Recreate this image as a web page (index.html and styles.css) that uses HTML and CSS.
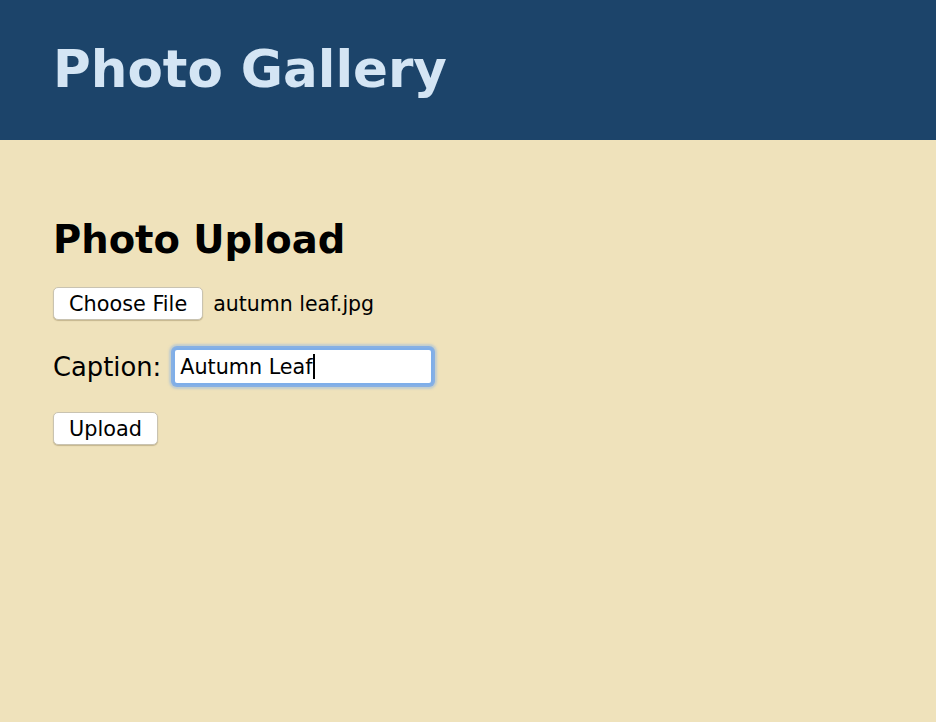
FILE: index.html
```html
<!DOCTYPE html>
<html>
<head>
<meta charset="utf-8">
<link rel="stylesheet" href="styles.css">
</head>
<body>
<header class="top">
  <h1 class="title">Photo Gallery</h1>
</header>
<main class="content">
  <h2 class="section-title">Photo Upload</h2>
  <div class="file-row">
    <button class="btn" type="button">Choose File</button>
    <span class="file-name">autumn leaf.jpg</span>
  </div>
  <div class="caption-row">
    <label class="caption-label">Caption:</label>
    <span class="input-wrap"><span class="input-text">Autumn Leaf</span><span class="caret"></span></span>
  </div>
  <div class="upload-row">
    <button class="btn" type="button">Upload</button>
  </div>
</main>
</body>
</html>
```
FILE: styles.css
```css
html, body {
  margin: 0;
  padding: 0;
  height: 100%;
}
body {
  background: #efe2bb;
  font-family: "DejaVu Sans", Verdana, sans-serif;
  color: #000;
}
.top {
  background: #1c446a;
  height: 140px;
  padding: 0 53px;
  display: flex;
  align-items: center;
}
.title {
  margin: 0;
  color: #d4e5f4;
  font-size: 51.5px;
  font-weight: bold;
  line-height: 1;
}
.content {
  padding: 78px 53px 0;
}
.section-title {
  margin: 0 0 25px;
  font-size: 38.5px;
  font-weight: bold;
  line-height: 44px;
}
.file-row {
  display: flex;
  align-items: center;
  gap: 10px;
  height: 33px;
}
.btn {
  font-family: "DejaVu Sans", Verdana, sans-serif;
  font-size: 20.8px;
  background: #fff;
  border: 1px solid #c9c3b1;
  border-radius: 5px;
  padding: 0 15px;
  height: 33px;
  color: #000;
  box-shadow: 0 1px 1px rgba(120,100,60,0.35);
}
.file-name {
  font-size: 20.5px;
}
.caption-row {
  display: flex;
  align-items: center;
  gap: 12px;
  margin-top: 28px;
}
.caption-label {
  font-size: 25.8px;
}
.input-wrap {
  display: flex;
  align-items: center;
  width: 256px;
  height: 33px;
  box-sizing: content-box;
  background: #fff;
  border: 2px solid #7eaee9;
  box-shadow: 0 0 0 2px rgba(125,170,230,0.85), 0 0 2px 4px rgba(150,185,225,0.5);
  border-radius: 4px;
  padding: 0;
  font-size: 20.7px;
}
.input-text {
  padding-left: 5px;
}
.caret {
  display: inline-block;
  width: 2px;
  height: 25px;
  background: #000;
}
.upload-row {
  margin-top: 27px;
}
```
